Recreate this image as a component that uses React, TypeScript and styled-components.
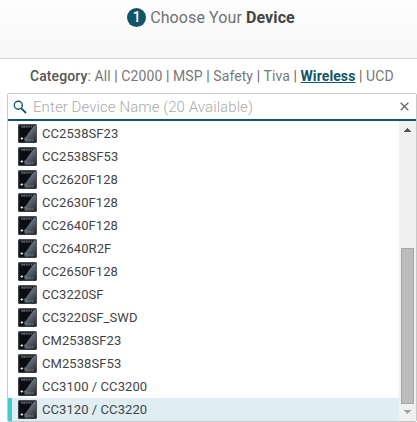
import React from "react";
import styled, { createGlobalStyle } from "styled-components";

const Global = createGlobalStyle`
  * { box-sizing: border-box; }
  body { margin: 0; background: #fff; font-family: Roboto, "Liberation Sans", sans-serif; overflow: hidden; }
`;
const Page = styled.main`
  width: 417px;
  height: 422px;
  overflow: hidden;
`;
const Header = styled.header`
  height: 59px;
  display: flex;
  justify-content: center;
  gap: 4px;
  padding: 8px 0 0 5px;
  background: linear-gradient(#fdfdfd, #f7f7f7);
  border-bottom: 1px solid #d4d4d4;
`;
const Step = styled.span`
  width: 19px;
  height: 19px;
  border-radius: 50%;
  background: #115566;
  color: #fff;
  font-size: 14px;
  font-weight: 500;
  line-height: 18px;
  text-align: center;
`;
const Title = styled.h1`
  margin: 0;
  font-size: 16px;
  line-height: 20px;
  font-weight: 400;
  letter-spacing: 0.1px;
  color: #717171;
  white-space: nowrap;
  b { color: #444; }
`;
const Categories = styled.nav`
  height: 34px;
  padding: 9px 0 0 30px;
  font-size: 14px;
  line-height: 17px;
  letter-spacing: 0.09px;
  color: #777;
  white-space: pre;
  b { color: #555; font-weight: 500; }
`;
const Category = styled.span<{ $active?: boolean }>`
  color: ${(p) => (p.$active ? "#115566" : "#777")};
  font-weight: ${(p) => (p.$active ? 700 : 400)};
  text-decoration: ${(p) => (p.$active ? "underline" : "none")};
`;
const Divider = styled.span`
  color: #666;
`;
const Picker = styled.section`
  width: 410px;
  height: 329px;
  margin-left: 7px;
  border: 1px solid #c8c8c8;
  border-radius: 2px;
`;
const Search = styled.div`
  height: 27px;
  display: flex;
  align-items: center;
  padding: 0 7px 0 5px;
  border-bottom: 2px solid #115566;
`;
const Placeholder = styled.span`
  flex: 1;
  margin-left: 6px;
  font-size: 15px;
  font-weight: 300;
  line-height: 18px;
  letter-spacing: 0.09px;
  color: #aaa;
`;
const Body = styled.div`
  display: flex;
  height: 300px;
`;
const List = styled.ul`
  flex: 1;
  margin: 0;
  padding: 1px 0 0;
  list-style: none;
`;
const Row = styled.li<{ $selected?: boolean }>`
  height: 23px;
  display: flex;
  align-items: center;
  gap: 5px;
  padding-left: 6px;
  border-left: 4px solid ${(p) => (p.$selected ? "#44c8d4" : "transparent")};
  background: ${(p) => (p.$selected ? "#e0edf3" : "#fff")};
  color: #444;
  font-size: 13px;
  line-height: 23px;
  letter-spacing: 0.07px;
`;
const Scrollbar = styled.div`
  width: 17px;
  display: flex;
  flex-direction: column;
  align-items: center;
  justify-content: space-between;
  background: #f0f0f0;
`;
const Thumb = styled.div`
  width: 13px;
  height: 156px;
  margin-top: 110px;
  background: #bcbcbc;
  border: 1px solid #a8a8a8;
`;

const Arrow = ({ down = false }: { down?: boolean }) => (
  <svg width="17" height="17" shapeRendering="crispEdges">
    {down ? <path d="M5 6h7v1h-1v1h-1v1h-1v1h-1v-1h-1v-1h-1v-1h-1z" fill="#a3a3a3" /> : <path d="M8 7h1v1h1v1h1v1h1v1h-7v-1h1v-1h1v-1h1z" fill="#505050" />}
  </svg>
);
const Magnifier = () => (
  <svg width="14" height="14" viewBox="0 0 14 14" fill="none" stroke="#115566">
    <circle cx="5.3" cy="5.3" r="4" strokeWidth="1.4" />
    <path d="M8.3 8.3l4.7 4.7" strokeWidth="1.8" />
  </svg>
);
const Close = () => (
  <svg width="9" height="9" viewBox="0 0 9 9" stroke="#666" strokeWidth="1.3">
    <path d="M.7.7l7.6 7.6M8.3.7L.7 8.3" />
  </svg>
);
const Chip = () => (
  <svg width="19" height="19" viewBox="0 0 19 19">
    <defs>
      <linearGradient id="sheen" x1="0.3" y1="0.1" x2="0.9" y2="1">
        <stop offset="0" stopColor="#7b8592" />
        <stop offset="1" stopColor="#262b31" />
      </linearGradient>
    </defs>
    <rect x=".3" y=".3" width="18.4" height="18.4" rx="1" fill="#0a0d12" />
    <path d="M18.4 1v17H7l0-4L15.5 2z" fill="url(#sheen)" />
    <path d="M.8 1v17.3h17.4" fill="none" stroke="#343a42" />
    <path d="M.8 1h17.4" stroke="#4e5660" />
    <path d="M3 2.9h11" stroke="#8b949e" strokeDasharray="2 .5" strokeWidth=".9" />
    <path d="M5 2.9h2" stroke="#a06060" strokeWidth=".8" />
    <path d="M2.5 14.5h2.6M3.8 13.2v2.6" stroke="#e2e5e8" />
    <path d="M6 14.2h2.7M6 16h10" stroke="#8d969e" strokeWidth=".8" strokeDasharray="1.5 .5" />
  </svg>
);

const categories = ["All", "C2000", "MSP", "Safety", "Tiva", "Wireless", "UCD"];
const devices = ["CC2538SF23", "CC2538SF53", "CC2620F128", "CC2630F128", "CC2640F128", "CC2640R2F", "CC2650F128", "CC3220SF", "CC3220SF_SWD", "CM2538SF23", "CM2538SF53", "CC3100 / CC3200", "CC3120 / CC3220"];

export default function App() {
  return (
    <Page>
      <Global />
      <Header>
        <Step>1</Step>
        <Title>Choose Your <b>Device</b></Title>
      </Header>
      <Categories>
        <b>Category</b>:{" "}
        {categories.map((name, i) => (
          <React.Fragment key={name}>
            {i > 0 && <Divider> | </Divider>}
            <Category $active={name === "Wireless"}>{name}</Category>
          </React.Fragment>
        ))}
      </Categories>
      <Picker>
        <Search>
          <Magnifier />
          <Placeholder>Enter Device Name (20 Available)</Placeholder>
          <Close />
        </Search>
        <Body>
          <List>
            {devices.map((name) => (
              <Row key={name} $selected={name === "CC3120 / CC3220"}><Chip />{name}</Row>
            ))}
          </List>
          <Scrollbar>
            <Arrow />
            <Thumb />
            <Arrow down />
          </Scrollbar>
        </Body>
      </Picker>
    </Page>
  );
}
